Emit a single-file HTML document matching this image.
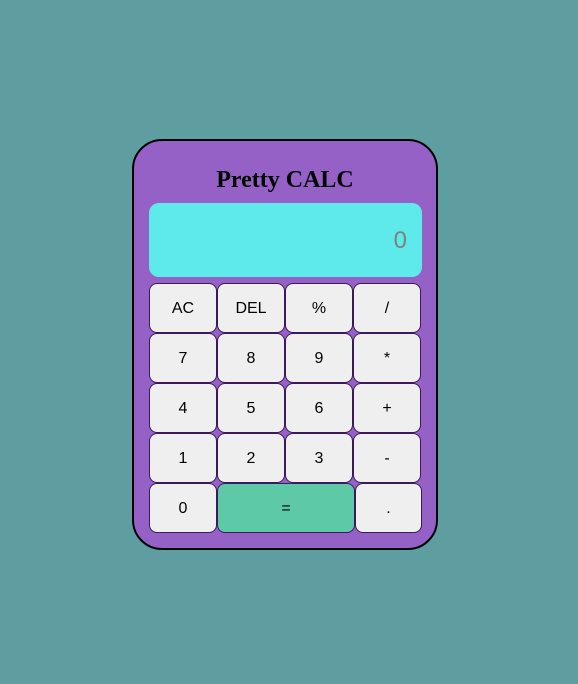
<!DOCTYPE html>
<html><head><style>
body{margin:0;width:578px;height:684px;background:#5f9ea0;position:relative;font-family:"Liberation Sans",Arial,sans-serif;}
.calc{position:absolute;left:132px;top:139px;width:302px;height:407px;background:#9561c6;border:2px solid #000;border-radius:30px;}
h1{position:absolute;left:132px;top:164px;width:306px;margin:0;text-align:center;font:bold 24px "Liberation Serif",serif;color:#000;line-height:32px;}
.disp{position:absolute;left:149px;top:203px;width:273px;height:74px;background:#5eeaea;border-radius:10px;color:#808080;font-size:24px;text-align:right;box-sizing:border-box;padding-right:15px;line-height:76px;}
.b{position:absolute;width:68px;height:50px;box-sizing:border-box;background:#efefef;border:1px solid #3a1a5a;border-radius:8px;text-align:center;line-height:50px;font-size:16px;color:#000;}
</style></head><body>
<div class="calc"></div>
<h1>Pretty CALC</h1>
<div class="disp">0</div>
<div class="b" style="left:149px;top:283px">AC</div>
<div class="b" style="left:217px;top:283px">DEL</div>
<div class="b" style="left:285px;top:283px">%</div>
<div class="b" style="left:353px;top:283px">/</div>
<div class="b" style="left:149px;top:333px">7</div>
<div class="b" style="left:217px;top:333px">8</div>
<div class="b" style="left:285px;top:333px">9</div>
<div class="b" style="left:353px;top:333px">*</div>
<div class="b" style="left:149px;top:383px">4</div>
<div class="b" style="left:217px;top:383px">5</div>
<div class="b" style="left:285px;top:383px">6</div>
<div class="b" style="left:353px;top:383px">+</div>
<div class="b" style="left:149px;top:433px">1</div>
<div class="b" style="left:217px;top:433px">2</div>
<div class="b" style="left:285px;top:433px">3</div>
<div class="b" style="left:353px;top:433px">-</div>
<div class="b" style="left:149px;top:483px">0</div>
<div class="b" style="left:217px;top:483px;width:138px;background:#5ec9a6">=</div>
<div class="b" style="left:355px;top:483px;width:67px">.</div>
</body></html>
